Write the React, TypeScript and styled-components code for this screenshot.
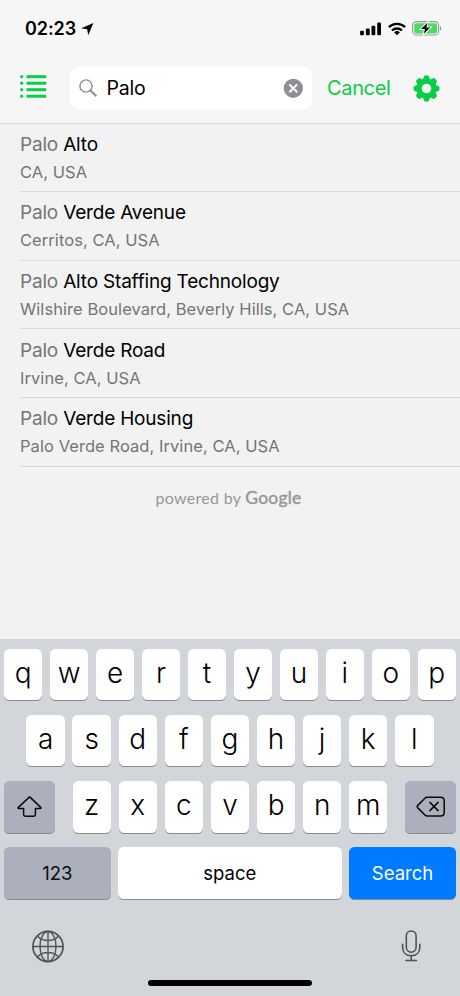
import React from "react";
import styled, { createGlobalStyle } from "styled-components";

const Global = createGlobalStyle`
  * { box-sizing: border-box; }
  html, body { margin: 0; padding: 0; }
  body { font-family: Inter, "Liberation Sans", sans-serif; background: #f2f2f2; color: #000; }
  svg { display: block; flex: none; }
`;

const Screen = styled.div`
  width: 460px;
  height: 996px;
  display: flex;
  flex-direction: column;
  background: #f2f2f2;
  overflow: hidden;
`;

const Header = styled.header`
  height: 124px;
  flex: none;
  background: #f6f6f6;
  border-bottom: 1px solid #d6d6d7;
`;

const StatusBar = styled.div`
  height: 57px;
  padding: 0 18px 0 25px;
  display: flex;
  align-items: center;
  justify-content: space-between;
`;

const Clock = styled.div`
  display: flex;
  align-items: center;
  gap: 5px;
  font-size: 18px;
  font-weight: 600;
  letter-spacing: -0.1px;
`;

const StatusIcons = styled.div`
  display: flex;
  align-items: center;
  gap: 6px;
`;

const NavBar = styled.div`
  height: 62px;
  padding: 0 19.5px 0 20px;
  display: flex;
  align-items: center;
`;

const IconButton = styled.button<{ $lift?: number }>`
  border: 0;
  padding: 0 0 ${(p) => p.$lift ?? 0}px;
  background: none;
  display: block;
`;

const SearchField = styled.div`
  flex: none;
  width: 242px;
  height: 44px;
  margin: 0 15px 0 23px;
  padding: 0 9px;
  display: flex;
  align-items: center;
  border-radius: 11px;
  background: #fff;
`;

const Query = styled.span`
  flex: 1;
  padding-left: 8.5px;
  font-size: 19.5px;
  letter-spacing: -0.2px;
`;

const Cancel = styled.button`
  flex: none;
  border: 0;
  padding: 0;
  width: 64px;
  margin-right: 22px;
  background: none;
  font: 400 20px Inter, sans-serif;
  letter-spacing: -0.35px;
  color: #09ce45;
  text-align: left;
`;

const Results = styled.ul`
  list-style: none;
  margin: -0.8px 0 0;
  padding: 0 0 0 20px;
`;

const Result = styled.li`
  height: 68.7px;
  padding-top: 8.3px;
  border-bottom: 1px solid #d9d9da;
`;

const Title = styled.div`
  font-size: 19px;
  line-height: 25px;
  letter-spacing: -0.19px;
  white-space: nowrap;
`;

const Match = styled.span`
  color: #757575;
`;

const Subtitle = styled.div`
  margin-top: 3px;
  font-size: 16.5px;
  line-height: 25px;
  letter-spacing: 0.06px;
  color: #757575;
  white-space: nowrap;
`;

const Attribution = styled.div`
  margin-top: 20px;
  padding-right: 3px;
  display: flex;
  justify-content: center;
  align-items: baseline;
  gap: 4px;
  font: 400 16px/22px Lato, sans-serif;
  letter-spacing: 0.3px;
  color: #979797;
`;

const Brand = styled.span`
  font-size: 17.5px;
  letter-spacing: 0.2px;
  -webkit-text-stroke: 0.4px #979797;
`;

const Keyboard = styled.section`
  height: 357px;
  flex: none;
  margin-top: auto;
  padding: 10px 4px 0;
  display: flex;
  flex-direction: column;
  background: #d2d5da;
`;

const KeyRow = styled.div<{ $inset?: number }>`
  height: 51.4px;
  margin-bottom: 14.7px;
  padding: 0 ${(p) => p.$inset ?? 0}px;
  display: flex;
  justify-content: space-between;
`;

const KeyGroup = styled.div`
  width: 315px;
  display: flex;
  justify-content: space-between;
`;

const tones = {
  light: { bg: "#fff", fg: "#000" },
  dark: { bg: "#abb0bc", fg: "#0a0a0c" },
  blue: { bg: "#007aff", fg: "#fff" },
};

const Key = styled.button<{ $width?: number; $tone?: keyof typeof tones; $label?: boolean }>`
  width: ${(p) => p.$width ?? 38.4}px;
  height: 100%;
  padding: 0 0 ${(p) => (p.$label ? 0 : 4)}px;
  border: 0;
  border-radius: 5.5px;
  display: flex;
  align-items: center;
  justify-content: center;
  background: ${(p) => tones[p.$tone ?? "light"].bg};
  color: ${(p) => tones[p.$tone ?? "light"].fg};
  box-shadow: 0 1px 0 #898b8f;
  font: ${(p) => (p.$label ? "400 18.5px" : "350 28px")} Inter, sans-serif;
`;

const KeyboardFooter = styled.div`
  height: 60px;
  padding: 17px 35px 0 27px;
  display: flex;
  justify-content: space-between;
  align-items: flex-start;
`;

const HomeIndicator = styled.div`
  width: 164px;
  height: 6px;
  margin: 6.6px auto 0;
  border-radius: 3px;
  background: #000;
`;

const places = [
  { rest: "Alto", detail: "CA, USA" },
  { rest: "Verde Avenue", detail: "Cerritos, CA, USA" },
  { rest: "Alto Staffing Technology", detail: "Wilshire Boulevard, Beverly Hills, CA, USA" },
  { rest: "Verde Road", detail: "Irvine, CA, USA" },
  { rest: "Verde Housing", detail: "Palo Verde Road, Irvine, CA, USA" },
];

const LocationArrow = () => (
  <svg width="13" height="14" viewBox="0 0 13 14">
    <path d="M12.4.9 7.2 13.2 6.2 7.2 .2 6.2Z" fill="#000" />
  </svg>
);

const Signal = () => (
  <svg width="22" height="14" viewBox="0 0 22 14">
    <rect x="0.1" y="8.8" width="3.8" height="4.5" rx="1.1" />
    <rect x="5.9" y="6.6" width="3.8" height="6.7" rx="1.1" />
    <rect x="11.5" y="3.8" width="3.8" height="9.5" rx="1.1" />
    <rect x="17.2" y="0.5" width="3.8" height="12.8" rx="1.1" />
  </svg>
);

const Wifi = () => (
  <svg width="18" height="14" viewBox="0 0 18 14">
    <g fill="none" stroke="#000" strokeWidth="2.3">
      <path d="M.9 5.1a11.6 11.6 0 0 1 16.2 0" />
      <path d="M4 8.5a7.2 7.2 0 0 1 10 0" />
    </g>
    <path d="M9 13.3 6.1 10.5a4.2 4.2 0 0 1 5.8 0Z" />
  </svg>
);

const Battery = () => (
  <svg width="30" height="15" viewBox="0 0 30 15">
    <rect x="0.6" y="0.6" width="26" height="13.4" rx="3.8" fill="none" stroke="#999" strokeWidth="1.1" />
    <path d="M28 5.2c1.8.5 1.8 3.7 0 4.2Z" fill="#999" />
    <rect x="2.2" y="2.2" width="22.8" height="10.2" rx="2.2" fill="#4cd964" />
    <path d="M15.6 1.8 9 8h4l-1.2 4.8L18.2 6.6h-4Z" fill="#000" stroke="#f6f6f6" strokeWidth="2" paintOrder="stroke" />
  </svg>
);

const ListIcon = () => (
  <svg width="27" height="25" viewBox="0 0 27 25" fill="#09ce45">
    {[2.7, 9.2, 15.7, 22.2].map((y) => (
      <g key={y}>
        <circle cx="1.7" cy={y} r="1.6" />
        <rect x="6.5" y={y - 1.5} width="19.7" height="3" />
      </g>
    ))}
  </svg>
);

const Magnifier = () => (
  <svg width="19" height="19" viewBox="0 0 19 19" fill="none" stroke="#8e8e93">
    <circle cx="7" cy="7" r="6.1" strokeWidth="1.4" />
    <path d="m11.5 11.5 5.8 5.8" strokeWidth="2.1" />
  </svg>
);

const Clear = () => (
  <svg width="20" height="20" viewBox="0 0 20 20">
    <circle cx="10.3" cy="10.3" r="9.6" fill="#8e8e93" />
    <path d="m6.4 6.4 7.8 7.8m0-7.8-7.8 7.8" stroke="#fff" strokeWidth="2" />
  </svg>
);

const Gear = () => (
  <svg width="27" height="27" viewBox="-13.5 -13.5 27 27">
    <circle r="7.4" fill="none" stroke="#09ce45" strokeWidth="5.2" />
    {[0, 45, 90, 135, 180, 225, 270, 315].map((a) => (
      <path
        key={a}
        transform={`rotate(${a})`}
        d="M-2.9-8.5-1.6-12.1H1.6L2.9-8.5Z"
        fill="#09ce45"
        stroke="#09ce45"
        strokeWidth="1.6"
        strokeLinejoin="round"
      />
    ))}
  </svg>
);

const Shift = () => (
  <svg width="26" height="24" viewBox="0 0 26 24">
    <path
      d="M12.3 2.1 1.3 12.4c-.5.5-.2 1 .4 1H6.6v6.2c0 1.1.5 1.6 1.6 1.6h8.6c1.1 0 1.6-.5 1.6-1.6v-6.2h4.9c.6 0 .9-.5.4-1L13 2.1q-.35-.3-.7 0Z"
      fill="none"
      stroke="#0a0a0c"
      strokeWidth="1.5"
      strokeLinejoin="round"
    />
  </svg>
);

const Backspace = () => (
  <svg width="30" height="22" viewBox="0 0 30 22" fill="none" stroke="#0a0a0c" strokeWidth="1.5" strokeLinecap="round" strokeLinejoin="round">
    <path d="M11.2 1.2h13.4c2.4 0 3.6 1.2 3.6 3.5v11.8c0 2.3-1.2 3.5-3.6 3.5H11.2c-1 0-1.6-.3-2.3-1L1.6 11.6q-.9-1 0-2L8.9 2.2c.7-.7 1.3-1 2.3-1Z" />
    <path d="m13.9 6.4 8.2 8.2m0-8.2-8.2 8.2" />
  </svg>
);

const Globe = () => (
  <svg width="33" height="33" viewBox="0 0 33 33" fill="none" stroke="#505257" strokeWidth="1.35">
    <circle cx="17" cy="16.5" r="15.1" strokeWidth="1.7" />
    <ellipse cx="17" cy="16.5" rx="8" ry="15" />
    <path d="M17 1.5v30M2 16.5h30M6.3 6c5.4 6 16 6 21.4 0M6.3 27c5.4-6 16-6 21.4 0" />
  </svg>
);

const Mic = () => (
  <svg width="20" height="32" viewBox="0 0 20 32" fill="none" stroke="#505257" strokeWidth="1.6" strokeLinecap="round">
    <rect x="5.3" y="1" width="9.8" height="21.2" rx="4.9" />
    <path d="M1.6 14.2v3c0 5.4 3.6 8.6 8.6 8.6s8.6-3.2 8.6-8.6v-3M10.2 25.8v4.6M5 30.5h10.4" />
  </svg>
);

export default function App() {
  return (
    <Screen>
      <Global />
      <Header>
        <StatusBar>
          <Clock>02:23 <LocationArrow /></Clock>
          <StatusIcons><Signal /><Wifi /><Battery /></StatusIcons>
        </StatusBar>
        <NavBar>
          <IconButton $lift={3} aria-label="Menu"><ListIcon /></IconButton>
          <SearchField>
            <Magnifier />
            <Query>Palo</Query>
            <Clear />
          </SearchField>
          <Cancel>Cancel</Cancel>
          <IconButton aria-label="Settings"><Gear /></IconButton>
        </NavBar>
      </Header>
      <Results>
        {places.map((p) => (
          <Result key={p.rest}>
            <Title><Match>Palo</Match> {p.rest}</Title>
            <Subtitle>{p.detail}</Subtitle>
          </Result>
        ))}
      </Results>
      <Attribution>powered by <Brand>Google</Brand></Attribution>
      <Keyboard>
        <KeyRow>{[..."qwertyuiop"].map((k) => <Key key={k}>{k}</Key>)}</KeyRow>
        <KeyRow $inset={22.4}>{[..."asdfghjkl"].map((k) => <Key key={k}>{k}</Key>)}</KeyRow>
        <KeyRow>
          <Key $width={51} $tone="dark" $label aria-label="Shift"><Shift /></Key>
          <KeyGroup>{[..."zxcvbnm"].map((k) => <Key key={k}>{k}</Key>)}</KeyGroup>
          <Key $width={51} $tone="dark" $label aria-label="Delete"><Backspace /></Key>
        </KeyRow>
        <KeyRow>
          <Key $width={106.7} $tone="dark" $label>123</Key>
          <Key $width={223.5} $label>space</Key>
          <Key $width={107} $tone="blue" $label>Search</Key>
        </KeyRow>
        <KeyboardFooter><Globe /><Mic /></KeyboardFooter>
        <HomeIndicator />
      </Keyboard>
    </Screen>
  );
}
